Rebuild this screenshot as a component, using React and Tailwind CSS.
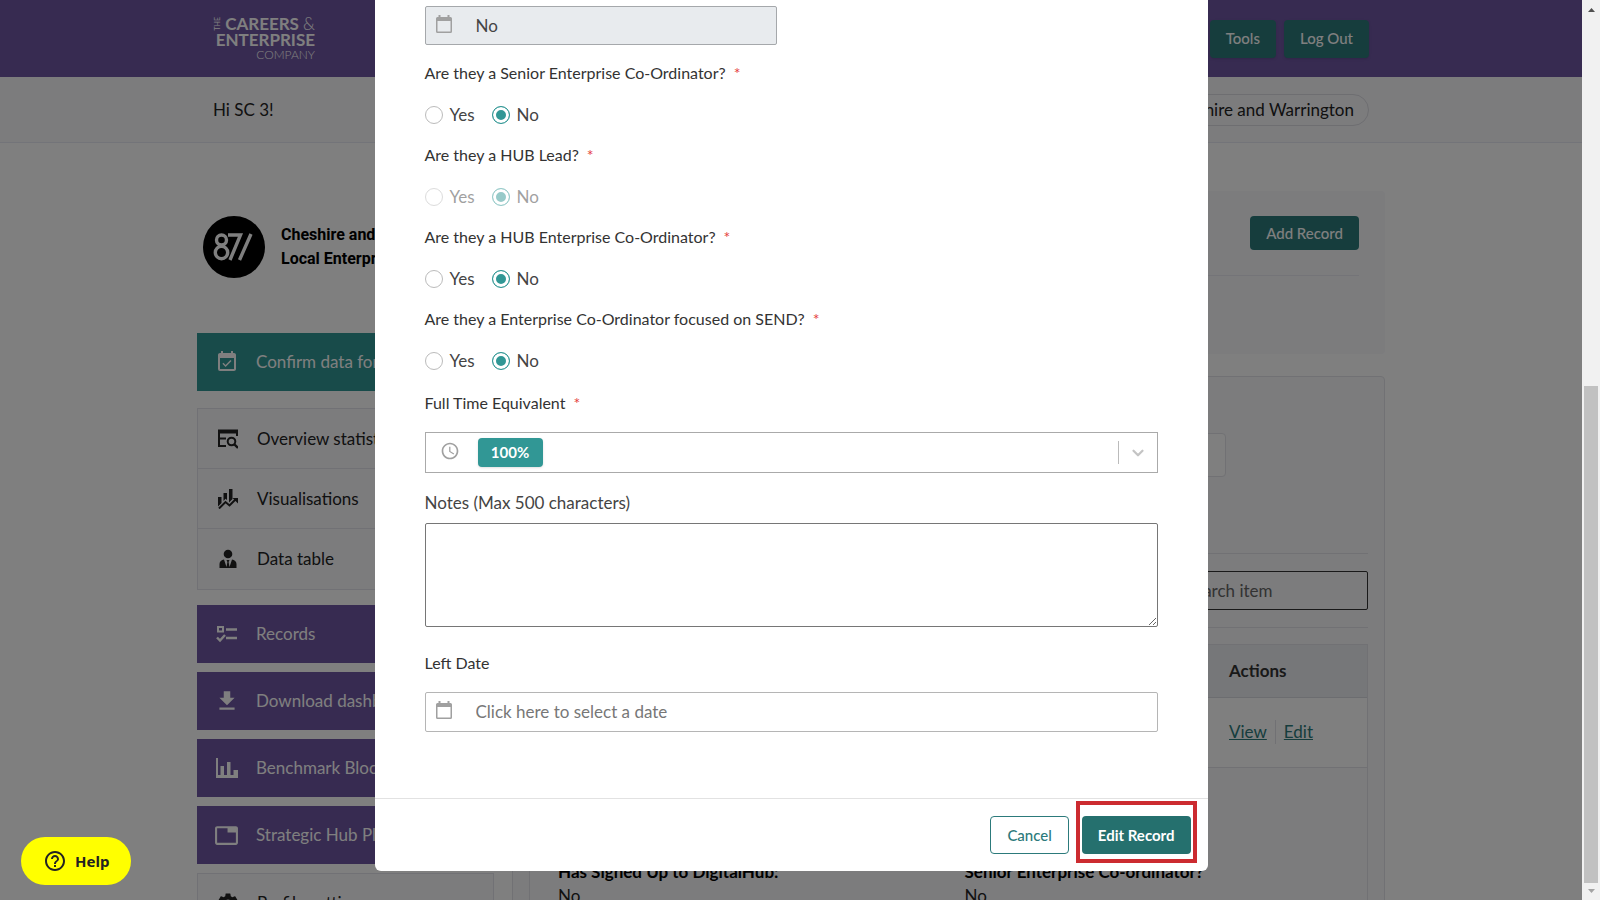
import React from 'react';
import {
  MdEventAvailable,
  MdFileDownload,
  MdTab,
  MdSettings,
  MdAccessTime,
  MdHelpOutline,
} from 'react-icons/md';
import { ChevronDown } from 'lucide-react';

const CalendarIcon = ({ className }) => (
  <svg viewBox="0 0 16 18" className={className} fill="currentColor" aria-hidden="true">
    <path
      fillRule="evenodd"
      d="M2.500 0h2v2h7V0h2v2h1A1.500 1.500 0 0 1 16 3.500v13a1.500 1.500 0 0 1-1.500 1.500h-13A1.500 1.500 0 0 1 0 16.500v-13A1.500 1.500 0 0 1 1.500 2h1zM1.500 6v10.500h13V6z"
    />
  </svg>
);

const OverviewIcon = () => (
  <svg viewBox="0 0 20 20" className="w-5 h-5" fill="none" stroke="currentColor" strokeWidth="2" aria-hidden="true">
    <path d="M0 2.500h20" strokeWidth="4" />
    <path d="M1 2v15h7M1 9.500h7M19 2v5" />
    <circle cx="13.500" cy="12.500" r="3.800" />
    <path d="M16 15l4 4" strokeWidth="2.400" />
  </svg>
);

const VisualisationsIcon = () => (
  <svg viewBox="0 0 20 20" className="w-5 h-5" fill="currentColor" aria-hidden="true">
    <path d="M0 8h3.500v6L0 17.500zM5.500 4H9v7L7.500 9.800 5.500 12zM11 0h3.500v10L11 13.500z" />
    <path d="M1 19.500l6.500-6.500 4 3.500L18 10" fill="none" stroke="currentColor" strokeWidth="2" />
    <path d="M14.500 9H20v5.500z" />
  </svg>
);

const PersonIcon = () => (
  <svg viewBox="0 0 20 20" className="w-5 h-5" fill="currentColor" aria-hidden="true">
    <circle cx="10" cy="5" r="4.300" />
    <path d="M1.500 19v-4c0-2.500 2-4 4.500-4.500L8.500 18l.9-5-.9-2h3l-.9 2 .9 5 2.500-7.500c2.500.5 4.500 2 4.500 4.500v4z" />
  </svg>
);

const RecordsIcon = () => (
  <svg viewBox="0 0 22 18" className="w-[22px] h-[18px]" fill="none" stroke="currentColor" strokeWidth="2" aria-hidden="true">
    <rect x="2" y="2" width="5" height="4.500" />
    <path d="M10 4.500h11M10 13h11M1 12.500l3 3 5-5.500" strokeWidth="2.400" />
  </svg>
);

const BarsIcon = () => (
  <svg viewBox="0 0 22 20" className="w-[22px] h-5" fill="currentColor" aria-hidden="true">
    <path d="M0 0h2v17h2.500V8H8v9h3V4h3.500v13h3v-5H22v8H0z" />
  </svg>
);

const LepLogo = () => (
  <svg viewBox="0 0 62 62" className="w-[62px] h-[62px] shrink-0" aria-hidden="true">
    <circle cx="31" cy="31" r="31" fill="#000" />
    <g fill="none" stroke="#fff" strokeWidth="3.400">
      <circle cx="18.500" cy="24" r="5" />
      <circle cx="18.500" cy="36.500" r="6.200" />
      <path d="M25 19h12.500L27 44M48 18L36.500 44" />
    </g>
  </svg>
);

const primaryNav = [
  { label: 'Records', icon: <RecordsIcon /> },
  { label: 'Download dashboard', icon: <MdFileDownload className="w-[26px] h-[26px]" /> },
  { label: 'Benchmark Blocks', icon: <BarsIcon /> },
  { label: 'Strategic Hub Plan', icon: <MdTab className="w-[25px] h-[25px]" /> },
];

const dataNav = [
  { label: 'Overview statistics', icon: <OverviewIcon /> },
  { label: 'Visualisations', icon: <VisualisationsIcon /> },
  { label: 'Data table', icon: <PersonIcon /> },
];

const questions = [
  { id: 'senior', label: 'Are they a Senior Enterprise Co-Ordinator?' },
  { id: 'hub-lead', label: 'Are they a HUB Lead?', disabled: true },
  { id: 'hub-ec', label: 'Are they a HUB Enterprise Co-Ordinator?' },
  { id: 'send', label: 'Are they a Enterprise Co-Ordinator focused on SEND?' },
];

const Header = () => (
  <header>
    <div className="bg-[#6e56a2] h-[77px]">
      <div className="max-w-[1156px] h-full mx-auto flex items-center justify-between text-white">
        <a href="#home" className="flex flex-col items-end w-[102px] leading-4">
          <span className="flex items-center justify-between w-full">
            <span className="text-[7px] leading-[8px] [writing-mode:vertical-rl] rotate-180">THE</span>
            <span className="text-[17px] font-bold">CAREERS</span>
            <span className="text-[17px] font-light">&amp;</span>
          </span>
          <span className="text-[17px] font-bold">ENTERPRISE</span>
          <span className="text-[12px] font-light leading-[14px]">COMPANY</span>
        </a>
        <div className="flex gap-2">
          <button className="h-[38px] px-4 rounded-sm bg-[#2c7a7b] text-[15px] font-medium shadow">Tools</button>
          <button className="h-[38px] px-4 rounded-sm bg-[#2c7a7b] text-[15px] font-medium shadow">Log Out</button>
        </div>
      </div>
    </div>
    <div className="bg-[#f8f8fb] h-[66px] border-b border-[#e6e8f2]">
      <div className="max-w-[1156px] h-full mx-auto flex items-center justify-between text-[17px]">
        <p>Hi SC 3!</p>
        <p className="h-8 px-[14px] leading-[30px] border border-[#dcdce2] rounded-full">Cheshire and Warrington</p>
      </div>
    </div>
  </header>
);

const Sidebar = () => (
  <aside className="w-[297px] shrink-0">
    <div className="flex items-center gap-4 h-[142px] px-[6px] pb-[30px]">
      <LepLogo />
      <p className="font-['Roboto',sans-serif] font-bold text-[16px] leading-6 text-black whitespace-nowrap">
        Cheshire and
        <br />
        Local Enterprise
      </p>
    </div>
    <a href="#confirm" className="flex items-center h-[58px] bg-[#319795] text-white text-[17px]">
      <span className="w-[59px] flex justify-center">
        <MdEventAvailable className="w-6 h-6" />
      </span>
      Confirm data for
    </a>
    <nav className="mt-[17px] border border-[#e2e3ea] bg-[#f8f8fb] divide-y divide-[#e2e3ea]">
      {dataNav.map((item) => (
        <a key={item.label} href="#data" className="flex items-center h-[60px] text-[17px]">
          <span className="w-[59px] flex justify-center">{item.icon}</span>
          {item.label}
        </a>
      ))}
    </nav>
    <nav className="mt-[15px] flex flex-col gap-[9px]">
      {primaryNav.map((item) => (
        <a key={item.label} href="#section" className="flex items-center h-[58px] bg-[#6e56a2] text-white text-[17px]">
          <span className="w-[59px] flex justify-center">{item.icon}</span>
          {item.label}
        </a>
      ))}
      <a href="#profile" className="flex items-center h-[60px] bg-[#f8f8fb] border border-[#e2e3ea] text-[17px]">
        <span className="w-[59px] flex justify-center">
          <MdSettings className="w-6 h-6" />
        </span>
        Profile settings
      </a>
    </nav>
  </aside>
);

const Records = () => (
  <main className="flex-1 min-w-0">
    <section className="h-[163px] bg-[#f8f8fb] rounded px-[26px] pt-[25px]">
      <div className="flex justify-end pb-[25px] border-b border-[#e8e9f0]">
        <button className="h-[34px] px-4 rounded-sm bg-[#2c7a7b] text-white text-[15px] font-medium">Add Record</button>
      </div>
    </section>
    <section className="mt-[22px] px-4 border border-[#e2e3e8] rounded bg-[#f8f8fb]">
      <div className="pt-14 pb-[76px] border-b border-[#e2e3e8]">
        <div className="w-[697px] h-[44px] rounded border border-[#e2e3e8] bg-white" />
      </div>
      <div className="flex justify-end py-[17px] border-b border-[#e2e3e8]">
        <input
          type="search"
          aria-label="Search item"
          placeholder="Search item"
          className="w-[200px] h-[39px] px-4 border border-[#333] rounded-xs text-[17px] placeholder:text-[#666]"
        />
      </div>
      <div className="mt-4 border border-[#e2e3e8]">
        <table className="w-full text-left">
          <thead>
            <tr className="h-[52px] bg-[#edeff3] border-b border-[#d8dae0]">
              <td />
              <th className="w-[138px] text-[17px] font-bold text-[#333]">Actions</th>
            </tr>
          </thead>
          <tbody>
            <tr className="h-[70px] bg-white border-b border-[#e2e3e8]">
              <td />
              <td className="text-[17px] text-[#2c7a7b]">
                <span className="inline-flex items-center">
                  <a href="#view" className="underline">View</a>
                  <span className="w-px h-6 mx-2 bg-[#e2e3e8]" />
                  <a href="#edit" className="underline">Edit</a>
                </span>
              </td>
            </tr>
          </tbody>
        </table>
        <dl className="grid grid-cols-2 px-7 pt-[92px] text-[17px] leading-6">
          <div>
            <dt className="font-bold text-black">Has Signed Up to DigitalHub:</dt>
            <dd>No</dd>
          </div>
          <div className="pl-4">
            <dt className="font-bold text-black">Senior Enterprise Co-ordinator?</dt>
            <dd>No</dd>
          </div>
        </dl>
      </div>
    </section>
  </main>
);

const Required = () => <span className="ml-2 text-[#e53e3e]">*</span>;

const RadioOption = ({ name, value, disabled, checked }) => (
  <label className={`flex items-center gap-[7px] text-[17px] ${disabled ? 'opacity-50' : ''}`}>
    <input
      type="radio"
      name={name}
      value={value}
      defaultChecked={checked}
      disabled={disabled}
      className="appearance-none w-[18px] h-[18px] rounded-full border border-[#bbb] bg-white checked:border-[#319795] checked:bg-[#319795] checked:shadow-[inset_0_0_0_3px_#fff]"
    />
    {value}
  </label>
);

const EditRecordModal = () => (
  <div role="dialog" aria-label="Edit Record" className="w-[833px] max-w-full bg-white rounded-b-md text-[#444]">
    <form className="px-[50px] pt-[6px] pb-[66px]">
      <div className="flex items-center w-[352px] h-[39px] border border-[#a5a8ab] rounded-xs bg-[#e8ebee]">
        <CalendarIcon className="w-4 h-[18px] ml-[10px] mb-1 text-[#a0a0a0]" />
        <input
          aria-label="Current status"
          defaultValue="No"
          disabled
          className="flex-1 min-w-0 ml-[24px] text-[17px] bg-transparent"
        />
      </div>
      <div className="mt-4 flex flex-col">
        {questions.map((q) => (
          <fieldset key={q.id} className="h-[82px]">
            <legend className="text-[16px] leading-6 text-[#333]">
              {q.label}
              <Required />
            </legend>
            <div className="flex items-center gap-[17px] h-5 mt-5">
              <RadioOption name={q.id} value="Yes" disabled={q.disabled} />
              <RadioOption name={q.id} value="No" disabled={q.disabled} checked />
            </div>
          </fieldset>
        ))}
      </div>
      <label htmlFor="fte" className="block mt-[2px] text-[16px] leading-6 text-[#333]">
        Full Time Equivalent
        <Required />
      </label>
      <div className="mt-[17px] flex items-center h-[41px] border border-[#aaa]">
        <MdAccessTime className="w-5 h-5 ml-[14px] mr-[18px] mb-1 text-[#a0a0a0]" />
        <select
          id="fte"
          className="appearance-none w-[65px] h-[29px] rounded bg-[#319795] text-white text-[15px] font-bold text-center shadow-sm"
        >
          <option>100%</option>
        </select>
        <span className="ml-auto w-px h-[23px] bg-[#bbb]" />
        <ChevronDown className="w-[18px] h-[18px] mx-[10px] text-[#c4c4c4]" strokeWidth={3} />
      </div>
      <label htmlFor="notes" className="block mt-[18px] text-[17px] leading-6">
        Notes (Max 500 characters)
      </label>
      <textarea id="notes" className="block mt-2 w-full h-[104px] border border-[#767676] rounded-xs" />
      <label htmlFor="left-date" className="block mt-6 text-[16px] leading-6 text-[#333]">
        Left Date
      </label>
      <div className="mt-[17px] flex items-center h-10 border border-[#b5b5b5] rounded-xs">
        <CalendarIcon className="w-4 h-[18px] ml-[10px] mb-1 text-[#a0a0a0]" />
        <input
          id="left-date"
          placeholder="Click here to select a date"
          className="flex-1 min-w-0 ml-[24px] text-[17px] placeholder:text-[#777]"
        />
      </div>
    </form>
    <footer className="flex justify-end gap-[13px] px-[17px] pt-[17px] pb-[17px] border-t border-[#e2e2e2]">
      <button className="h-[38px] px-4 rounded-sm border border-[#2c7a7b] text-[#2c7a7b] text-[15px] font-medium">
        Cancel
      </button>
      <div className="relative">
        <button className="h-[38px] px-4 rounded-sm bg-[#25706e] text-white text-[15px] font-bold">Edit Record</button>
        <span className="absolute -left-[6px] -right-[6px] -top-[15px] -bottom-[9px] border-4 border-[#cc2b30] pointer-events-none" />
      </div>
    </footer>
  </div>
);

const ScrollBar = () => (
  <div className="w-[18px] shrink-0 flex flex-col items-center bg-[#f1f1f1]" aria-hidden="true">
    <svg viewBox="0 0 17 17" className="w-[17px] h-[17px]" fill="#505050">
      <path d="M5 12h7L8.500 8z" />
    </svg>
    <div className="flex-[369] w-full" />
    <div className="flex-[496] w-[14px] bg-[#c1c1c1]" />
    <svg viewBox="0 0 17 17" className="w-[17px] h-[17px]" fill="#a3a3a3">
      <path d="M5 6h7l-3.500 4z" />
    </svg>
  </div>
);

const App = () => {
  return (
    <div className="flex h-screen overflow-hidden bg-white font-['Lato',sans-serif] text-[#222]">
      <div className="relative flex-1 min-w-0 overflow-hidden">
        <Header />
        <div className="max-w-[1188px] mx-auto mt-12 flex gap-[18px]">
          <Sidebar />
          <Records />
        </div>
        <div className="absolute inset-0 bg-black/50 flex justify-center items-start">
          <EditRecordModal />
        </div>
        <button className="absolute left-[21px] bottom-[15px] h-12 px-[22px] rounded-full bg-[#ffff00] text-[#222] flex items-center gap-2 font-['Noto_Sans',sans-serif] font-bold text-[15px]">
          <MdHelpOutline className="w-6 h-6" />
          Help
        </button>
      </div>
      <ScrollBar />
    </div>
  );
};

export default App;
